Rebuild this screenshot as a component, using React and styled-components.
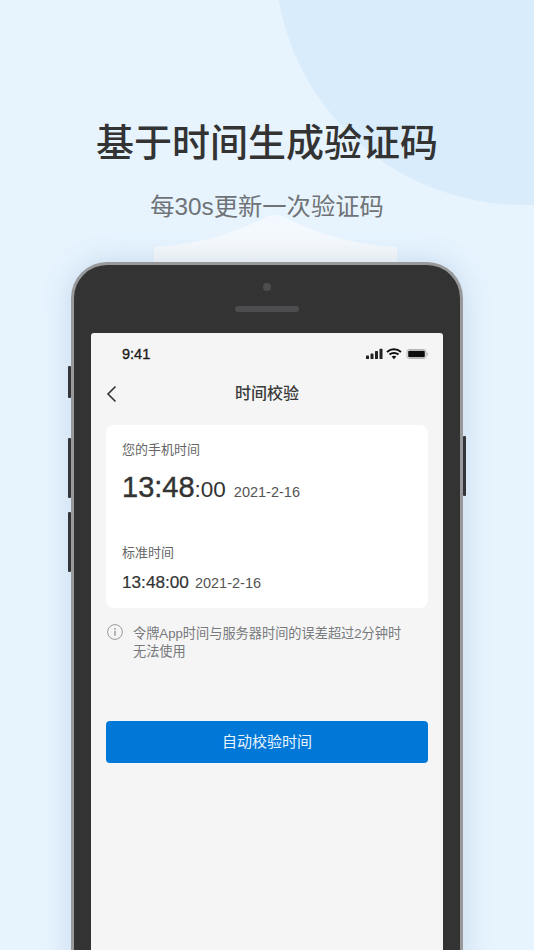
import React from 'react';
import styled, { createGlobalStyle } from 'styled-components';

const GlobalStyle = createGlobalStyle`
  html, body {
    margin: 0;
    padding: 0;
  }
  body {
    font-family: "Liberation Sans", "Noto Sans CJK SC", sans-serif;
  }
`;

const Page = styled.main`
  position: relative;
  width: 534px;
  height: 950px;
  overflow: hidden;
  background: #e7f4fe;
  display: flex;
  flex-direction: column;
  align-items: center;
  padding-top: 116px;
  box-sizing: border-box;
`;

const Circle = styled.div`
  position: absolute;
  left: 275px;
  top: -291px;
  width: 496px;
  height: 496px;
  border-radius: 50%;
  background: #d9ecfc;
`;

const Title = styled.h1`
  position: relative;
  margin: 0;
  font-size: 38px;
  line-height: 54px;
  font-weight: 500;
  color: #333333;
`;

const Subtitle = styled.p`
  position: relative;
  margin: 19px 0 0;
  font-size: 24.3px;
  line-height: 36px;
  font-weight: 400;
  color: #6f7377;
`;

const PhoneArea = styled.div`
  position: relative;
  margin-top: 37px;
  width: 392px;
`;

const Dome = styled.svg`
  position: absolute;
  left: 83px;
  top: -47px;
  width: 243px;
  height: 47px;
`;

const Phone = styled.section`
  position: relative;
  width: 392px;
  height: 760px;
  box-sizing: border-box;
  padding: 0 17px;
  background: #333333;
  border: 3px solid #98999b;
  border-bottom: none;
  border-radius: 36px 36px 0 0;
  box-shadow: 0 0 30px rgba(70, 110, 160, 0.2);
`;

const SideButton = styled.span`
  position: absolute;
  top: ${(p) => p.$top}px;
  height: ${(p) => p.$height}px;
  ${(p) => (p.$right ? 'right: -6px;' : 'left: -6px;')}
  width: 3px;
  background: #333438;
  border-radius: 1px;
`;

const Bezel = styled.div`
  height: 68px;
  display: flex;
  flex-direction: column;
  align-items: center;
`;

const Camera = styled.span`
  margin-top: 18px;
  width: 8px;
  height: 8px;
  border-radius: 50%;
  background: #4d4d4f;
`;

const Speaker = styled.span`
  margin-top: 15px;
  width: 64px;
  height: 6px;
  border-radius: 3px;
  background: #4d4d4f;
`;

const Screen = styled.div`
  height: 692px;
  padding: 0 15px;
  background: #f5f5f5;
  border-radius: 3px 3px 0 0;
`;

const StatusBar = styled.div`
  height: 42px;
  display: flex;
  align-items: center;
  justify-content: space-between;
  padding: 0 0 0 16px;
`;

const StatusTime = styled.span`
  font-size: 14.5px;
  -webkit-text-stroke: 0.35px #1a1a1a;
  color: #1a1a1a;
`;

const StatusIcons = styled.svg`
  width: 62px;
  height: 12px;
`;

const NavBar = styled.header`
  position: relative;
  height: 38px;
  display: flex;
  align-items: center;
  justify-content: center;
`;

const BackIcon = styled.svg`
  position: absolute;
  left: 0;
  top: 10px;
  width: 12px;
  height: 18px;
`;

const NavTitle = styled.h2`
  margin: 0;
  font-size: 16px;
  line-height: 24px;
  font-weight: 500;
  color: #3a3a3a;
`;

const Card = styled.div`
  margin-top: 12px;
  padding: 15px 16px 16px;
  background: #ffffff;
  border-radius: 8px;
`;

const Label = styled.div`
  font-size: 13px;
  line-height: 20px;
  color: #666666;
`;

const TimeRow = styled.div`
  display: flex;
  align-items: baseline;
  height: ${(p) => (p.$large ? 42 : 20)}px;
  margin-top: ${(p) => (p.$large ? 6 : 9)}px;
  margin-bottom: ${(p) => (p.$large ? 35 : 0)}px;
  line-height: ${(p) => (p.$large ? 42 : 20)}px;
  color: #333333;
`;

const TimeMain = styled.span`
  font-size: ${(p) => (p.$large ? 29 : 17.2)}px;
  -webkit-text-stroke: ${(p) => (p.$large ? 0.4 : 0.2)}px #333333;
`;

const TimeSeconds = styled.span`
  font-size: 22.5px;
`;

const DateText = styled.span`
  margin-left: ${(p) => (p.$large ? 8 : 6)}px;
  font-size: 14.5px;
  color: #555555;
`;

const Note = styled.div`
  margin-top: 16px;
  display: flex;
  gap: 10px;
`;

const InfoIcon = styled.svg`
  flex: none;
  margin-left: 1px;
  width: 16px;
  height: 16px;
`;

const NoteText = styled.p`
  margin: 1px 0 -1px;
  width: 274px;
  font-size: 13.2px;
  line-height: 18px;
  color: #77797c;
`;

const PrimaryButton = styled.button`
  display: block;
  width: 100%;
  height: 42px;
  margin-top: 61px;
  padding: 0 0 3px;
  border: none;
  border-radius: 4px;
  background: #0078d8;
  color: #e9f4fd;
  font-family: inherit;
  font-size: 15px;
`;

export default function App() {
  return (
    <Page>
      <GlobalStyle />
      <Circle />
      <Title>基于时间生成验证码</Title>
      <Subtitle>每30s更新一次验证码</Subtitle>
      <PhoneArea>
        <Dome viewBox="0 0 243 47" aria-hidden="true">
          <defs>
            <linearGradient id="domeFade" x1="0" y1="0" x2="0" y2="1">
              <stop offset="0" stopColor="#f2f9ff" />
              <stop offset="1" stopColor="#f7f9fb" />
            </linearGradient>
          </defs>
          <path
            d="M0 32 C48 30 90 14 112 2 C118 -1 124 -1 130 2 C152 14 194 30 243 32 L243 47 L0 47 Z"
            fill="url(#domeFade)"
          />
        </Dome>
        <Phone>
          <SideButton $top={101} $height={32} />
          <SideButton $top={173} $height={60} />
          <SideButton $top={247} $height={60} />
          <SideButton $right $top={171} $height={60} />
          <Bezel>
            <Camera />
            <Speaker />
          </Bezel>
          <Screen>
            <StatusBar>
              <StatusTime>9:41</StatusTime>
              <StatusIcons viewBox="0 0 62 12" aria-hidden="true">
                <rect x="0" y="7.5" width="3" height="3.5" rx="0.6" fill="#222" />
                <rect x="4.5" y="5.5" width="3" height="5.5" rx="0.6" fill="#222" />
                <rect x="9" y="3" width="3" height="8" rx="0.6" fill="#222" />
                <rect x="13.5" y="0.8" width="3" height="10.2" rx="0.6" fill="#222" />
                <path
                  d="M21 4 C25 0.4 31 0.4 35 4 M23.5 6.6 C26 4.4 30 4.4 32.5 6.6"
                  fill="none"
                  stroke="#111"
                  strokeWidth="2"
                />
                <path d="M25.6 8.6 C27 7.6 29 7.6 30.4 8.6 L28 11.2 Z" fill="#111" />
                <rect x="41" y="1.5" width="19" height="9" rx="2.2" fill="none" stroke="#b4b4b4" />
                <rect x="42.2" y="2.7" width="16.6" height="6.6" rx="1" fill="#0d0d0d" />
                <rect x="60.6" y="4.7" width="1.2" height="2.8" rx="0.6" fill="#b4b4b4" />
              </StatusIcons>
            </StatusBar>
            <NavBar>
              <BackIcon viewBox="0 0 12 18" aria-hidden="true">
                <path d="M9.5 1.5 L2 9 L9.5 16.5" fill="none" stroke="#333" strokeWidth="1.6" />
              </BackIcon>
              <NavTitle>时间校验</NavTitle>
            </NavBar>
            <Card>
              <Label>您的手机时间</Label>
              <TimeRow $large>
                <TimeMain $large>13:48</TimeMain>
                <TimeSeconds>:00</TimeSeconds>
                <DateText $large>2021-2-16</DateText>
              </TimeRow>
              <Label>标准时间</Label>
              <TimeRow>
                <TimeMain>13:48:00</TimeMain>
                <DateText>2021-2-16</DateText>
              </TimeRow>
            </Card>
            <Note>
              <InfoIcon viewBox="0 0 16 16" aria-hidden="true">
                <circle cx="8" cy="8" r="7.4" fill="none" stroke="#9a9a9a" strokeWidth="1" />
                <circle cx="8" cy="4.9" r="0.8" fill="#8a8a8a" />
                <rect x="7.4" y="6.8" width="1.2" height="5" fill="#8a8a8a" />
              </InfoIcon>
              <NoteText>令牌App时间与服务器时间的误差超过2分钟时无法使用</NoteText>
            </Note>
            <PrimaryButton>自动校验时间</PrimaryButton>
          </Screen>
        </Phone>
      </PhoneArea>
    </Page>
  );
}
